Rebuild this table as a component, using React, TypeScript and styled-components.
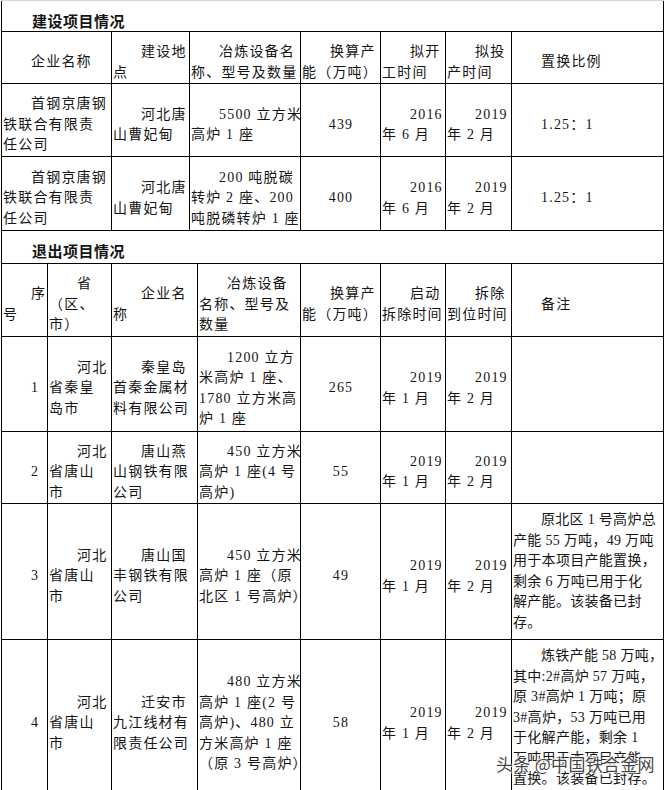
import styled, { createGlobalStyle } from 'styled-components';

const GlobalStyle = createGlobalStyle`
  html, body {
    margin: 0;
    padding: 0;
    background: #fff;
  }
  body {
    font-family: "Liberation Serif", "Noto Sans CJK SC", serif;
    color: #151515;
  }
`;

const Page = styled.div`
  position: relative;
  width: 665px;
`;

const Sheet = styled.div`
  width: 663px;
  margin-left: 1px;
  border-top: 1px solid #d6d6d6;
`;

const SectionTitle = styled.div<{ $h: number }>`
  box-sizing: border-box;
  width: 663px;
  height: ${(p) => p.$h}px;
  border-left: 1px solid #000;
  border-right: 1px solid #000;
  padding: 10px 0 0 30px;
  font-family: "Noto Sans CJK SC", sans-serif;
  font-weight: 700;
  font-size: 15px;
  line-height: 20px;
  letter-spacing: 0.5px;
`;

const Table = styled.table`
  width: 662px;
  table-layout: fixed;
  border-collapse: collapse;
`;

const Row = styled.tr<{ $h: number }>`
  height: ${(p) => p.$h}px;
`;

const Cell = styled.td<{ $center?: boolean; $top?: boolean }>`
  box-sizing: border-box;
  border: 1px solid #000;
  padding: ${(p) => (p.$top ? '6px 0 0 1px' : '10px 0 0 1px')};
  vertical-align: ${(p) => (p.$top ? 'top' : 'middle')};
  text-align: ${(p) => (p.$center ? 'center' : 'left')};
  font-size: 14px;
  line-height: 20.5px;
  letter-spacing: ${(p) => (p.$top ? '0.3px' : '1.2px')};
  white-space: nowrap;
`;

const Line = styled.div<{ $indent?: boolean }>`
  padding-left: ${(p) => (p.$indent ? '28px' : '0')};
`;

const Watermark = styled.div`
  position: absolute;
  left: 496px;
  top: 751px;
  font-family: "Noto Sans CJK SC", sans-serif;
  font-size: 17px;
  letter-spacing: 0.3px;
  color: rgba(35, 35, 35, 0.85);
  text-shadow: 0 0 2px #fff, 1px 1px 1px #fff, -1px -1px 1px #fff;
  white-space: nowrap;
`;

// a cell text is written with "|" between its lines
const Para = ({ text, center }: { text: string; center?: boolean }) => {
  if (center) return <Line>{text}</Line>;
  return (
    <>
      {text.split('|').map((l, i) => (
        <Line key={i} $indent={i === 0}>
          {l || '\u00a0'}
        </Line>
      ))}
    </>
  );
};

interface Column {
  width: number;
  numeric?: boolean;
  note?: boolean;
}

interface TableData {
  columns: Column[];
  header: string[];
  headerHeight: number;
  rows: { h: number; cells: string[] }[];
}

const buildTable: TableData = {
  columns: [
    { width: 110 },
    { width: 78 },
    { width: 111 },
    { width: 80, numeric: true },
    { width: 65 },
    { width: 66 },
    { width: 152 },
  ],
  header: ['企业名称', '建设地|点', '冶炼设备名|称、型号及数量', '换算产|能（万吨）', '拟开|工时间', '拟投|产时间', '置换比例'],
  headerHeight: 51,
  rows: [
    {
      h: 73,
      cells: ['首钢京唐钢|铁联合有限责|任公司', '河北唐|山曹妃甸', '5500 立方米|高炉 1 座', '439', '2016|年 6 月', '2019|年 2 月', '1.25：1'],
    },
    {
      h: 74,
      cells: ['首钢京唐钢|铁联合有限责|任公司', '河北唐|山曹妃甸', '200 吨脱碳|转炉 2 座、200|吨脱磷转炉 1 座', '400', '2016|年 6 月', '2019|年 2 月', '1.25：1'],
    },
  ],
};

const exitTable: TableData = {
  columns: [
    { width: 46 },
    { width: 64 },
    { width: 86 },
    { width: 103 },
    { width: 80, numeric: true },
    { width: 65 },
    { width: 66 },
    { width: 152, note: true },
  ],
  header: ['序|号', '省|（区、|市）', '企业名|称', '冶炼设备|名称、型号及|数量', '换算产|能（万吨）', '启动|拆除时间', '拆除|到位时间', '备注'],
  headerHeight: 72,
  rows: [
    {
      h: 95,
      cells: ['1', '河北|省秦皇|岛市', '秦皇岛|首秦金属材|料有限公司', '1200 立方|米高炉 1 座、|1780 立方米高|炉 1 座', '265', '2019|年 1 月', '2019|年 2 月', ''],
    },
    {
      h: 72,
      cells: ['2', '河北|省唐山|市', '唐山燕|山钢铁有限|公司', '450 立方米|高炉 1 座(4 号|高炉)', '55', '2019|年 1 月', '2019|年 2 月', ''],
    },
    {
      h: 136,
      cells: [
        '3',
        '河北|省唐山|市',
        '唐山国|丰钢铁有限|公司',
        '450 立方米|高炉 1 座（原|北区 1 号高炉）',
        '49',
        '2019|年 1 月',
        '2019|年 2 月',
        '原北区 1 号高炉总|产能 55 万吨，49 万吨|用于本项目产能置换，|剩余 6 万吨已用于化|解产能。该装备已封|存。',
      ],
    },
    {
      h: 158,
      cells: [
        '4',
        '河北|省唐山|市',
        '迁安市|九江线材有|限责任公司',
        '480 立方米|高炉 1 座(2 号|高炉)、480 立|方米高炉 1 座|（原 3 号高炉）',
        '58',
        '2019|年 1 月',
        '2019|年 2 月',
        '炼铁产能 58 万吨，|其中:2#高炉 57 万吨，|原 3#高炉 1 万吨；原|3#高炉，53 万吨已用|于化解产能，剩余 1|万吨用于本项目产能|置换。该装备已封存。',
      ],
    },
  ],
};

const DataTable = ({ data }: { data: TableData }) => (
  <Table>
    <colgroup>
      {data.columns.map((c, i) => (
        <col key={i} style={{ width: c.width }} />
      ))}
    </colgroup>
    <tbody>
      <Row $h={data.headerHeight}>
        {data.header.map((t, i) => (
          <Cell key={i}>
            <Para text={t} />
          </Cell>
        ))}
      </Row>
      {data.rows.map((r, ri) => (
        <Row key={ri} $h={r.h}>
          {r.cells.map((t, i) => {
            const col = data.columns[i];
            return (
              <Cell key={i} $center={col.numeric} $top={col.note}>
                {t && <Para text={t} center={col.numeric} />}
              </Cell>
            );
          })}
        </Row>
      ))}
    </tbody>
  </Table>
);

export default function App() {
  return (
    <Page>
      <GlobalStyle />
      <Sheet>
        <SectionTitle $h={30}>建设项目情况</SectionTitle>
        <DataTable data={buildTable} />
        <SectionTitle $h={32}>退出项目情况</SectionTitle>
        <DataTable data={exitTable} />
      </Sheet>
      <Watermark>头条 @中国铁合金网</Watermark>
    </Page>
  );
}
